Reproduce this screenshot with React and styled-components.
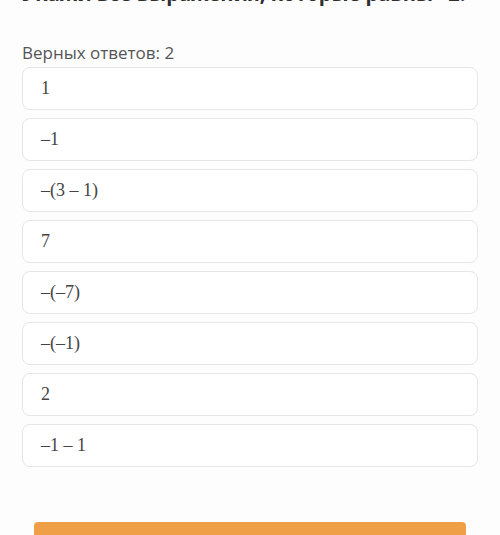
import React from "react";
import styled, { createGlobalStyle } from "styled-components";

const Global = createGlobalStyle`
html, body {
    margin:0;
    padding:0;
    background:#fdfdfd;
    overflow:hidden;
}
`;

const Page = styled.div`
width:500px;
height:535px;
padding:0 22px;
box-sizing:border-box;
font-family:"Open Sans", "Liberation Sans", sans-serif;
display:flex;
flex-direction:column;
overflow:hidden;
& > * {
    flex-shrink:0;
}
`;

const Question = styled.div`
margin-top:-18px;
font-size:20px;
line-height:24px;
font-weight:700;
color:#2f2f2f;
white-space:nowrap;
`;

const Count = styled.div`
margin-top:35px;
font-size:17px;
line-height:24px;
color:#555;
`;

const List = styled.div`
margin-top:2px;
display:flex;
flex-direction:column;
gap:8px;
`;

const Answer = styled.div`
height:43px;
box-sizing:border-box;
border:1.5px solid #e6e6e6;
border-radius:8px;
background:#fff;
display:flex;
align-items:center;
padding:0 18px;
font-family:"Liberation Serif", "DejaVu Serif", serif;
font-size:18px;
color:#444;
`;

const Submit = styled.button`
margin:55px 12px 0;
height:40px;
border:none;
border-radius:4px;
background:#efa047;
`;

const answers = ['1', '–1', '–(3 – 1)', '7', '–(–7)', '–(–1)', '2', '–1 – 1'];

const App = () => {
    return(
        <Page>
            <Global/>
            <Question>Укажи все выражения, которые равны –2.</Question>
            <Count>Верных ответов: 2</Count>
            <List>
                {answers.map((a, i) => <Answer key={i}>{a}</Answer>)}
            </List>
            <Submit/>
        </Page>
    );
}

export default App;
